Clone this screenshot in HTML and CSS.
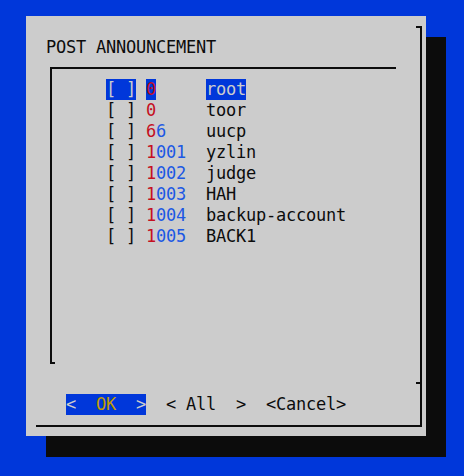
FILE: index.html
```html
<!DOCTYPE html>
<html>
<head>
<meta charset="utf-8">
<link rel="stylesheet" href="styles.css">
</head>
<body>
<div class="screen">
  <div class="dialog">
    <div class="frame">
      <div class="hook"></div>
      <div class="title">POST ANNOUNCEMENT</div>
      <div class="listbox">
        <div class="items">
<div class="row"><span class="hl">[ ]</span> <span class="hl key">0</span>     <span class="hl">root</span></div>
<div class="row">[ ] <span class="key">0</span>     toor</div>
<div class="row">[ ] <span class="key">6</span><span class="tag">6</span>    uucp</div>
<div class="row">[ ] <span class="key">1</span><span class="tag">001</span>  yzlin</div>
<div class="row">[ ] <span class="key">1</span><span class="tag">002</span>  judge</div>
<div class="row">[ ] <span class="key">1</span><span class="tag">003</span>  HAH</div>
<div class="row">[ ] <span class="key">1</span><span class="tag">004</span>  backup-account</div>
<div class="row">[ ] <span class="key">1</span><span class="tag">005</span>  BACK1</div>
        </div>
        <div class="corner"></div>
      </div>
      <div class="tick"></div>
      <div class="buttons"><span class="btn active">&lt;  <span class="ok">OK</span>  &gt;</span>  <span class="btn">&lt; All  &gt;</span>  <span class="btn">&lt;Cancel&gt;</span></div>
    </div>
  </div>
</div>
</body>
</html>
```
FILE: styles.css
```css
html, body {
  margin: 0;
  padding: 0;
  background: #0037da;
}
.screen {
  width: 464px;
  height: 476px;
  padding: 16px 0 0 26px;
  box-sizing: border-box;
  font-family: "DejaVu Sans Mono", monospace;
  font-size: 17px;
  letter-spacing: -0.235px;
  line-height: 21px;
  color: #0c0c0c;
}
.dialog {
  width: 400px;
  height: 420px;
  background: #cccccc;
  box-shadow: 20px 21px 0 #0c0c0c;
  padding: 10px 0 0 10px;
  box-sizing: border-box;
}
.frame {
  width: 384px;
  height: 399px;
  border-right: 2px solid #0c0c0c;
  border-bottom: 2px solid #0c0c0c;
  display: flex;
  flex-direction: column;
}
.hook {
  align-self: flex-end;
  width: 4px;
  height: 2px;
  background: #0c0c0c;
}
.title {
  margin-top: 9px;
  padding-left: 10px;
  height: 21px;
  white-space: pre;
}
.listbox {
  margin-top: 9px;
  margin-left: 14px;
  width: 346px;
  height: 297px;
  box-sizing: border-box;
  border-top: 2px solid #0c0c0c;
  border-left: 2px solid #0c0c0c;
  display: flex;
  flex-direction: column;
}
.items {
  padding: 10px 0 0 54px;
}
.row {
  height: 21px;
  white-space: pre;
}
.corner {
  margin-top: auto;
  width: 3px;
  height: 2px;
  background: #0c0c0c;
}
.key { color: #c50f1f; }
.tag { color: #1c58e4; }
.hl {
  display: inline-block;
  vertical-align: top;
  height: 21px;
  background: #0037da;
  color: #cccccc;
}
.hl.key { color: #c50f1f; }
.tick {
  margin-top: 18px;
  align-self: flex-end;
  width: 4px;
  height: 2px;
  background: #0c0c0c;
}
.buttons {
  margin-top: 10px;
  padding-left: 30px;
  height: 21px;
  white-space: pre;
}
.btn {
  display: inline-block;
  vertical-align: top;
  height: 21px;
}
.btn.active {
  background: #0037da;
  color: #cccccc;
}
.ok { color: #c19c00; }
```
